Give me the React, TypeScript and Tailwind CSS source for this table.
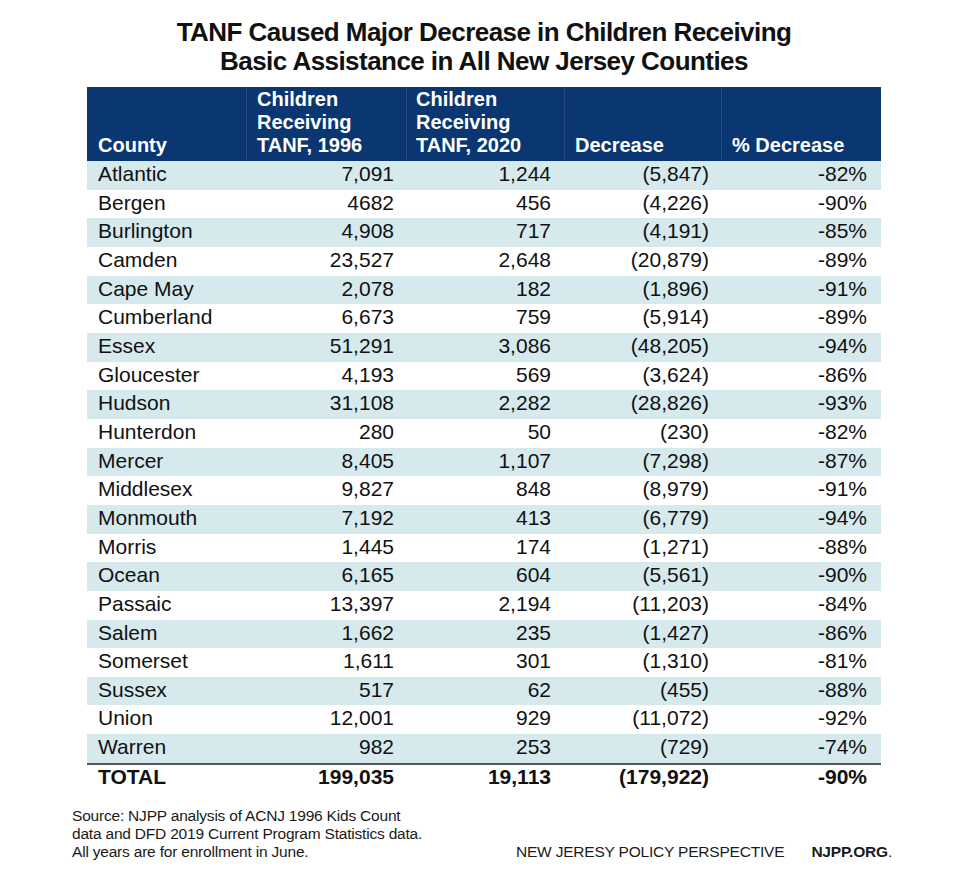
import React from 'react';

const rows: [string, string, string, string, string][] = [
  ['Atlantic', '7,091', '1,244', '(5,847)', '-82%'],
  ['Bergen', '4682', '456', '(4,226)', '-90%'],
  ['Burlington', '4,908', '717', '(4,191)', '-85%'],
  ['Camden', '23,527', '2,648', '(20,879)', '-89%'],
  ['Cape May', '2,078', '182', '(1,896)', '-91%'],
  ['Cumberland', '6,673', '759', '(5,914)', '-89%'],
  ['Essex', '51,291', '3,086', '(48,205)', '-94%'],
  ['Gloucester', '4,193', '569', '(3,624)', '-86%'],
  ['Hudson', '31,108', '2,282', '(28,826)', '-93%'],
  ['Hunterdon', '280', '50', '(230)', '-82%'],
  ['Mercer', '8,405', '1,107', '(7,298)', '-87%'],
  ['Middlesex', '9,827', '848', '(8,979)', '-91%'],
  ['Monmouth', '7,192', '413', '(6,779)', '-94%'],
  ['Morris', '1,445', '174', '(1,271)', '-88%'],
  ['Ocean', '6,165', '604', '(5,561)', '-90%'],
  ['Passaic', '13,397', '2,194', '(11,203)', '-84%'],
  ['Salem', '1,662', '235', '(1,427)', '-86%'],
  ['Somerset', '1,611', '301', '(1,310)', '-81%'],
  ['Sussex', '517', '62', '(455)', '-88%'],
  ['Union', '12,001', '929', '(11,072)', '-92%'],
  ['Warren', '982', '253', '(729)', '-74%'],
];

const cols = 'grid grid-cols-[160px_160px_158px_157px_159px]';

const App = () => {
  return (
    <div className="w-[959px] min-h-[882px] bg-white text-[#111] font-['Liberation_Sans',Arial,sans-serif]">
      <div className="ml-[87px] w-[794px] pt-[18px]">
        <h1 className="text-center text-[26px] leading-[29px] font-bold tracking-[-0.55px] mb-[11px]">
          TANF Caused Major Decrease in Children Receiving
          <br />
          Basic Assistance in All New Jersey Counties
        </h1>

        {/* header */}
        <div className={`${cols} h-[74px] bg-[#0a3672] text-white font-bold text-[20px] leading-[23px]`}>
          <div className="flex items-end pl-[11px] pb-[4px] border-r border-[#24497e]">County</div>
          <div className="flex items-end pl-[10px] pb-[4px] border-r border-[#24497e]">
            Children<br />Receiving<br />TANF, 1996
          </div>
          <div className="flex items-end pl-[9px] pb-[4px] border-r border-[#24497e]">
            Children<br />Receiving<br />TANF, 2020
          </div>
          <div className="flex items-end pl-[10px] pb-[4px] border-r border-[#24497e]">Decrease</div>
          <div className="flex items-end pl-[10px] pb-[4px]">% Decrease</div>
        </div>

        {/* body */}
        <div className="text-[21px] leading-[23px]">
          {rows.map((r, i) => (
            <div key={r[0]} className={`${cols} h-[28.67px] pt-[1px] ${i % 2 === 0 ? 'bg-[#d6eaee]' : 'bg-white'}`}>
              <div className="pl-[11px]">{r[0]}</div>
              <div className="text-right pr-[13px]">{r[1]}</div>
              <div className="text-right pr-[14px]">{r[2]}</div>
              <div className="text-right pr-[13px]">{r[3]}</div>
              <div className="text-right pr-[14px]">{r[4]}</div>
            </div>
          ))}
          <div className={`${cols} h-[29px] border-t-2 border-[#555] font-bold`}>
            <div className="pl-[11px]">TOTAL</div>
            <div className="text-right pr-[13px]">199,035</div>
            <div className="text-right pr-[14px]">19,113</div>
            <div className="text-right pr-[13px]">(179,922)</div>
            <div className="text-right pr-[14px]">-90%</div>
          </div>
        </div>
      </div>

      {/* footer */}
      <div className="flex items-end justify-between ml-[72px] w-[820px] mt-[15px] text-[15.5px] leading-[18px] tracking-[-0.2px] text-[#1a1a1a]">
        <p>
          Source: NJPP analysis of ACNJ 1996 Kids Count
          <br />
          data and DFD 2019 Current Program Statistics data.
          <br />
          All years are for enrollment in June.
        </p>
        <p className="flex gap-[27px]">
          <span>NEW JERESY POLICY PERSPECTIVE</span>
          <span>
            <span className="font-bold">NJPP.ORG</span>.
          </span>
        </p>
      </div>
    </div>
  );
};

export default App;
